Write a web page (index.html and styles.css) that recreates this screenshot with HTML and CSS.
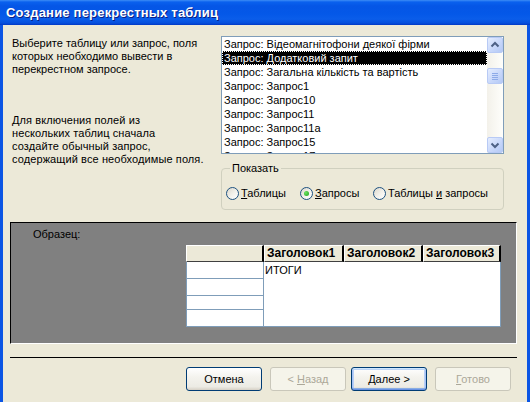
FILE: index.html
```html
<!DOCTYPE html>
<html lang="ru">
<head>
<meta charset="utf-8">
<title>Создание перекрестных таблиц</title>
<link rel="stylesheet" href="styles.css">
</head>
<body>
<div class="window">
  <div class="titlebar">Создание перекрестных таблиц</div>
  <div class="client">
    <div class="top">
      <div class="intro">
        <p>Выберите таблицу или запрос, поля<br>которых необходимо вывести в<br>перекрестном запросе.</p>
        <p class="second">Для включения полей из<br>нескольких таблиц сначала<br>создайте обычный запрос,<br>содержащий все необходимые поля.</p>
      </div>
      <div class="right">
        <div class="listbox">
          <div class="items">
            <div class="item">Запрос: Відеомагнітофони деякої фірми</div>
            <div class="item selected">Запрос: Додатковий запит</div>
            <div class="item">Запрос: Загальна кількість та вартість</div>
            <div class="item">Запрос: Запрос1</div>
            <div class="item">Запрос: Запрос10</div>
            <div class="item">Запрос: Запрос11</div>
            <div class="item">Запрос: Запрос11а</div>
            <div class="item">Запрос: Запрос15</div>
            <div class="item">Запрос: Запрос17</div>
          </div>
          <div class="scrollbar">
            <div class="sbtn">
              <svg width="14" height="14" viewBox="0 0 14 14"><path d="M3.5 8.5 L7 5 L10.5 8.5" fill="none" stroke="#4D6185" stroke-width="2"/></svg>
            </div>
            <div class="track">
              <div class="thumb">
                <svg width="14" height="14" viewBox="0 0 14 14"><path d="M4 4.5H10M4 6.5H10M4 8.5H10M4 10.5H10" stroke="#8DAAE8" stroke-width="1"/></svg>
              </div>
            </div>
            <div class="sbtn">
              <svg width="14" height="14" viewBox="0 0 14 14"><path d="M3.5 5.5 L7 9 L10.5 5.5" fill="none" stroke="#4D6185" stroke-width="2"/></svg>
            </div>
          </div>
        </div>
        <fieldset class="group">
          <legend>Показать</legend>
          <div class="radios">
            <label class="opt o1"><span class="radio"></span><span><u>Т</u>аблицы</span></label>
            <label class="opt o2"><span class="radio checked"></span><span><u>З</u>апросы</span></label>
            <label class="opt o3"><span class="radio"></span><span>Таблицы <u>и</u> запросы</span></label>
          </div>
        </fieldset>
      </div>
    </div>
    <div class="sample">
      <div class="sample-label">Образец:</div>
      <div class="grid">
        <div class="hcell"></div>
        <div class="hcell">Заголовок1</div>
        <div class="hcell">Заголовок2</div>
        <div class="hcell">Заголовок3</div>
        <div class="rows">
          <div class="rcell r1"></div>
          <div class="rcell r2"></div>
          <div class="rcell r3"></div>
          <div class="rcell r4"></div>
        </div>
        <div class="values">ИТОГИ</div>
      </div>
    </div>
    <div class="separator"></div>
    <div class="buttons">
      <button class="btn">Отмена</button>
      <button class="btn disabled b-back">&lt; <u>Н</u>азад</button>
      <button class="btn default b-next"><u>Д</u>алее &gt;</button>
      <button class="btn disabled b-finish"><u>Г</u>отово</button>
    </div>
  </div>
</div>
</body>
</html>
```
FILE: styles.css
```css
html, body {
  margin: 0;
  padding: 0;
}
body {
  width: 530px;
  height: 402px;
  overflow: hidden;
  font-family: "Liberation Sans", Arial, sans-serif;
  font-size: 11px;
  color: #000;
}
.window {
  width: 530px;
  height: 402px;
  display: flex;
  flex-direction: column;
}
.titlebar {
  height: 25px;
  box-sizing: border-box;
  padding: 4px 0 0 6px;
  line-height: 17px;
  font-size: 13px;
  font-weight: bold;
  color: #fff;
  text-shadow: 1px 1px 0 #0A1E80;
  letter-spacing: 0.2px;
  background: linear-gradient(to bottom, #3D8DF5 0, #0A61EE 2px, #0556E6 6px, #0458E8 14px, #0A5DEA 19px, #0650DD 23px, #0238C4 25px);
}
.client {
  flex: 1;
  background: #ECE9D8;
  border-left: 3px solid #0B55E4;
  border-right: 3px solid #0B55E4;
}
.top {
  display: flex;
}
.intro {
  width: 218px;
  box-sizing: border-box;
  padding: 12px 0 0 9px;
  line-height: 13px;
  white-space: nowrap;
}
.intro p {
  margin: 0;
}
.intro p.second {
  margin-top: 38px;
  letter-spacing: 0.1px;
}
.right {
  width: 283px;
}
.listbox {
  margin-top: 11px;
  width: 283px;
  height: 118px;
  box-sizing: border-box;
  border: 1px solid #7F9DB9;
  background: #fff;
  display: flex;
  overflow: hidden;
}
.items {
  flex: 1;
  overflow: hidden;
}
.item {
  height: 14px;
  line-height: 14px;
  padding-left: 2px;
  white-space: nowrap;
  overflow: hidden;
}
.item.selected {
  background: #000;
  color: #fff;
  outline: 1px dotted #fff;
  outline-offset: -1px;
}
.scrollbar {
  width: 16px;
  display: flex;
  flex-direction: column;
  background: linear-gradient(to right, #F3F1EA, #FEFEFB);
}
.sbtn, .thumb {
  width: 16px;
  height: 16px;
  box-sizing: border-box;
  border: 1px solid #B8CAF5;
  border-radius: 2px;
  background: linear-gradient(135deg, #E5EDFE 0%, #C6D6FA 60%, #B4C9F5 100%);
  display: flex;
  align-items: center;
  justify-content: center;
}
.track {
  flex: 1;
  padding-top: 15px;
}
.thumb {
  height: 16px;
}
.group {
  margin: 8px 0 0 0;
  padding: 0;
  width: 283px;
  box-sizing: border-box;
  border: 1px solid #D0D0BF;
  border-radius: 4px;
}
.group legend {
  margin-left: 8px;
  padding: 0 2px;
  line-height: 13px;
}
.radios {
  display: flex;
  align-items: center;
  margin-top: 11px;
  padding: 0 0 9px 4px;
  height: 14px;
}
.opt {
  display: flex;
  align-items: center;
  gap: 2px;
  line-height: 14px;
}
.opt.o1 { width: 74px; }
.opt.o2 { width: 73px; }
.radio {
  width: 13px;
  height: 13px;
  box-sizing: border-box;
  border: 1px solid #1C5180;
  border-radius: 50%;
  background: linear-gradient(135deg, #DCD8CC 0%, #F3F2EC 55%, #FFFFFF 100%);
  display: flex;
  align-items: center;
  justify-content: center;
}
.radio.checked::after {
  content: "";
  width: 5px;
  height: 5px;
  border-radius: 50%;
  background: radial-gradient(circle at 35% 35%, #6BE35F, #21A121);
}
.sample {
  margin: 12px 0 0 7px;
  width: 507px;
  height: 122px;
  box-sizing: border-box;
  background: #808080;
  border-top: 1px solid #000;
  border-left: 1px solid #000;
  border-right: 1px solid #fff;
  border-bottom: 1px solid #fff;
  padding: 5px 0 0 22px;
}
.sample-label {
  line-height: 13px;
}
.grid {
  margin: 4px 0 0 153px;
  width: 315px;
  display: grid;
  grid-template-columns: 78px 80px 79px 78px;
  grid-template-rows: 17px 65px;
}
.hcell {
  box-sizing: border-box;
  background: #ECE9D8;
  border-top: 1px solid #fff;
  border-left: 1px solid #fff;
  border-right: 2px solid #000;
  border-bottom: 1px solid #404040;
  font-weight: bold;
  font-size: 12px;
  line-height: 15px;
  padding-left: 2px;
  white-space: nowrap;
  overflow: hidden;
}
.rows {
  display: flex;
  flex-direction: column;
  background: #fff;
}
.rcell {
  box-sizing: border-box;
  border-left: 1px solid #7F9DB9;
  border-right: 1px solid #7F9DB9;
  border-bottom: 1px solid #7F9DB9;
}
.r1 { height: 17px; }
.r2 { height: 17px; }
.r3 { height: 14px; }
.r4 { height: 17px; }
.values {
  grid-column: 2 / span 3;
  background: #fff;
  box-sizing: border-box;
  border-right: 1px solid #7F9DB9;
  border-bottom: 1px solid #7F9DB9;
  padding: 2px 0 0 1px;
  line-height: 13px;
}
.separator {
  margin: 13px 0 0 7px;
  width: 507px;
  border-top: 1px solid #000;
}
.buttons {
  display: flex;
  margin-top: 9px;
  padding-left: 183px;
}
.btn {
  width: 76px;
  height: 24px;
  box-sizing: border-box;
  border: 1px solid #003C74;
  border-radius: 3px;
  background: linear-gradient(to bottom, #FFFFFF 0%, #F4F3EE 40%, #ECEBE4 85%, #D6D0C5 100%);
  font-family: "Liberation Sans", Arial, sans-serif;
  font-size: 11px;
  font-weight: normal;
  color: #000;
  padding: 0;
  margin: 0;
}
.btn.b-back { margin-left: 8px; }
.btn.b-next { margin-left: 5px; }
.btn.b-finish { margin-left: 8px; }
.btn.default {
  box-shadow: inset 0 1px 0 #CEE7FF, inset 0 -1px 0 #6A92E4, inset 1px 0 0 #A7C2F5, inset -1px 0 0 #A7C2F5, inset 0 2px 0 #BCD4F6, inset 0 -2px 0 #89ADE4, inset 2px 0 0 #B9D0F6, inset -2px 0 0 #B9D0F6;
}
.btn.disabled {
  border-color: #C9C7BA;
  background: #F5F4EA;
  color: #ACA899;
}
```
